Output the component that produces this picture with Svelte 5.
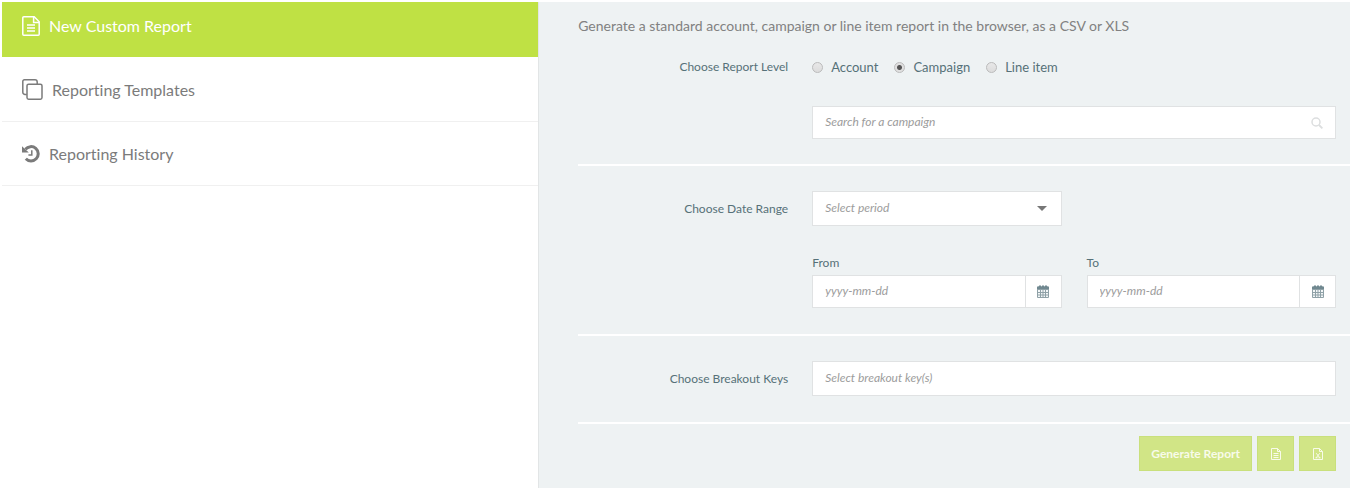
<script>
  const menu = [
    { name: "New Custom Report", icon: "file" },
    { name: "Reporting Templates", icon: "copy" },
    { name: "Reporting History", icon: "history" },
  ];
  const levels = ["Account", "Campaign", "Line item"];

  let active = $state("New Custom Report");
  let level = $state("Campaign");
  let search = $state("");
  let period = $state("");
  let from = $state("");
  let to = $state("");
  let keys = $state("");
</script>

{#snippet calendar()}
  <svg width="12" height="13" viewBox="0 0 12 13">
    <path d="M1 1.5h10a1 1 0 0 1 1 1V12a1 1 0 0 1-1 1H1a1 1 0 0 1-1-1V2.500a1 1 0 0 1 1-1z" fill="#8fa1a7" />
    <path d="M0 4V2.500a1 1 0 0 1 1-1h1V.5h2v1h1V.5h2v1h1V.5h2v1h1a1 1 0 0 1 1 1V4z" fill="#708890" />
    <path
      d="M1 5h2v2H1zM4 5h1.500v2H4zM6.500 5H8v2H6.500zM9 5h2v2H9zM1 8h2v1.500H1zM4 8h1.500v1.500H4zM6.500 8H8v1.500H6.500zM9 8h2v1.500H9zM1 10.500h2V12H1zM4 10.500h1.500V12H4zM6.500 10.500H8V12H6.500zM9 10.500h2V12H9z"
      fill="#f4f7f8"
    />
  </svg>
{/snippet}

<div class="page">
  <nav class="sidebar">
    {#each menu as item}
      <a
        href="#{item.icon}"
        class="item"
        class:active={active === item.name}
        onclick={() => (active = item.name)}
      >
        {#if item.icon === "file"}
          <svg width="18" height="20" viewBox="0 0 18 20" fill="none" stroke="currentColor" stroke-width="1.5">
            <path d="M1.8.8h10.4l5 5v12.4a1 1 0 0 1-1 1H1.8a1 1 0 0 1-1-1V1.8a1 1 0 0 1 1-1z" />
            <path d="M11.6 1v5.4H17M5 9h8M5 12h8M5 15h8" />
          </svg>
        {:else if item.icon === "copy"}
          <svg width="21" height="21" viewBox="0 0 21 21" fill="none" stroke="currentColor" stroke-width="1.5">
            <rect x="5" y="5.2" width="15" height="15" rx="1.6" />
            <path d="M4.8 15.4H3a2.2 2.2 0 0 1-2.2-2.2V2.4A1.6 1.6 0 0 1 2.4.8H13A2.2 2.2 0 0 1 15.2 3v2" />
          </svg>
        {:else}
          <svg width="18" height="18" viewBox="0 0 18 18" fill="none" stroke="currentColor">
            <path d="M3.400 4.300A7.200 7.200 0 1 1 3.800 13.800" stroke-width="3" />
            <path d="M0 1.200v6.200h6.800z" fill="currentColor" stroke="none" />
            <path d="M9.800 5.200v4.800H6.400" stroke-width="1.5" />
          </svg>
        {/if}
        <span>{item.name}</span>
      </a>
    {/each}
  </nav>

  <main>
    <p class="intro">Generate a standard account, campaign or line item report in the browser, as a CSV or XLS</p>

    <section class="row level">
      <span class="label" id="level-label">Choose Report Level</span>
      <div class="fields">
        <div class="radios" role="radiogroup" aria-labelledby="level-label">
          {#each levels as name}
            <label><input type="radio" name="level" value={name} bind:group={level} />{name}</label>
          {/each}
        </div>
        <div class="box search">
          <input type="text" placeholder="Search for a campaign" aria-label="Search for a campaign" bind:value={search} />
          <svg width="12" height="12" viewBox="0 0 12 12" fill="none" stroke="#dcdedf">
            <circle cx="5" cy="5" r="4" stroke-width="1.5" />
            <path d="M8 8l3.4 3.4" stroke-width="1.8" />
          </svg>
        </div>
      </div>
    </section>

    <section class="row">
      <label class="label" for="period">Choose Date Range</label>
      <div class="fields">
        <div class="box tall period">
          <select id="period" bind:value={period}>
            <option value="">Select period</option>
            <option value="today">Today</option>
            <option value="week">Last 7 days</option>
            <option value="month">Last 30 days</option>
          </select>
          <svg width="10" height="5" viewBox="0 0 10 5"><path d="M0 0h10L5 5z" fill="#777" /></svg>
        </div>
        <div class="dates">
          <div>
            <label for="from">From</label>
            <div class="box">
              <input id="from" type="text" placeholder="yyyy-mm-dd" bind:value={from} />
              <button class="pick" aria-label="Pick start date">{@render calendar()}</button>
            </div>
          </div>
          <div>
            <label for="to">To</label>
            <div class="box">
              <input id="to" type="text" placeholder="yyyy-mm-dd" bind:value={to} />
              <button class="pick" aria-label="Pick end date">{@render calendar()}</button>
            </div>
          </div>
        </div>
      </div>
    </section>

    <section class="row">
      <label class="label" for="keys">Choose Breakout Keys</label>
      <div class="fields">
        <div class="box tall">
          <input id="keys" type="text" placeholder="Select breakout key(s)" bind:value={keys} />
        </div>
      </div>
    </section>

    <footer>
      <button class="generate">Generate Report</button>
      <button class="export" aria-label="Export as CSV">
        <svg width="10" height="12" viewBox="0 0 10 12" fill="none" stroke="currentColor">
          <path d="M.5.5h6l3 3v8h-9zM6.5.5v3h3M2.500 5.500h5M2.500 7.500h5M2.500 9.500h5" />
        </svg>
      </button>
      <button class="export" aria-label="Export as XLS">
        <svg width="10" height="12" viewBox="0 0 10 12" fill="none" stroke="currentColor">
          <path d="M.5.5h6l3 3v8h-9zM6.5.5v3h3M3.200 5.200l3.600 4.600M6.800 5.200L3.200 9.800M2.500 9.800h2M5.500 9.800h2" />
        </svg>
      </button>
    </footer>
  </main>
</div>

<style>
  :global(body) {
    background: #fff;
  }

  .page {
    display: flex;
    padding: 2px 0 8px 2px;
    font-family: Lato, "Open Sans", sans-serif;
    font-size: 12px;
    font-variant-ligatures: none;
    line-height: 16px;
    color: #567178;
  }

  input,
  select,
  button {
    font: inherit;
    color: inherit;
  }

  .sidebar {
    box-sizing: border-box;
    flex: none;
    width: calc(40% - 2px);
    border-right: 1px solid #e2e5e6;
  }

  .item {
    display: flex;
    align-items: center;
    gap: 9px;
    height: 63px;
    padding-left: 20px;
    border-bottom: 1px solid #f0f0f0;
    font-size: 16px;
    line-height: 20px;
    color: #7b7b7b;
    text-decoration: none;
  }

  .item.active {
    height: 47px;
    padding-bottom: 8px;
    border-bottom-color: #fff;
    background: #bfe144;
    background-clip: padding-box;
    color: #fff;
  }

  main {
    flex: 1;
    padding: 14px 0 17px 39px;
    background: #eef2f3;
  }

  .intro {
    margin: 0;
    font-size: 14px;
    line-height: 20px;
    color: #818181;
  }

  .row {
    display: grid;
    grid-template-columns: 210px 1fr;
    gap: 24px;
    padding: 25px 14px 26px 0;
    border-bottom: 2px solid #fff;
  }

  .row.level {
    padding-top: 23px;
    padding-bottom: 25px;
  }

  .label {
    padding-top: 10px;
    text-align: right;
  }

  .level .label {
    padding-top: 0;
  }

  .radios {
    display: flex;
    gap: 16px;
    margin-bottom: 31px;
    font-size: 13px;
  }

  .radios label {
    display: flex;
    align-items: center;
    gap: 8px;
  }

  .radios input {
    appearance: none;
    box-sizing: border-box;
    width: 11px;
    height: 11px;
    margin: 0;
    border: 1px solid #bbb;
    border-radius: 50%;
    background: linear-gradient(#e8e8e8, #dcdcdc);
  }

  .radios input:checked {
    background: radial-gradient(circle, #555 0 2px, #e0e0e0 3px);
  }

  .box {
    display: flex;
    align-items: center;
    box-sizing: border-box;
    height: 33px;
    border: 1px solid #e0e2e3;
    background: #fff;
  }

  .box.tall {
    height: 35px;
  }

  .box input,
  .box select {
    flex: 1;
    align-self: stretch;
    min-width: 0;
    margin: 0;
    padding: 0 12px 2px;
    border: 0;
    background: none;
    outline: none;
  }

  .box select {
    appearance: none;
    font-style: italic;
    color: #9c9c9c;
  }

  .box input::placeholder {
    font-style: italic;
    color: #9c9c9c;
    opacity: 1;
  }

  .search {
    padding-right: 12px;
  }

  .period {
    width: 250px;
    padding-right: 14px;
  }

  .dates {
    display: grid;
    grid-template-columns: 1fr 1fr;
    gap: 25px;
    margin-top: 29px;
  }

  .dates label {
    display: block;
    margin-bottom: 4px;
  }

  .pick {
    display: flex;
    align-items: center;
    justify-content: center;
    align-self: stretch;
    width: 36px;
    padding: 0;
    border: 0;
    border-left: 1px solid #e0e2e3;
    background: none;
  }

  footer {
    display: flex;
    justify-content: flex-end;
    gap: 5px;
    padding: 12px 14px 0 0;
  }

  footer button {
    display: flex;
    align-items: center;
    justify-content: center;
    height: 35px;
    padding: 0 11px;
    border: 1px solid #c9e07c;
    background: #d1e586;
    color: #f8fbea;
  }

  .generate {
    font-weight: bold;
  }

  .export {
    width: 37px;
  }
</style>
